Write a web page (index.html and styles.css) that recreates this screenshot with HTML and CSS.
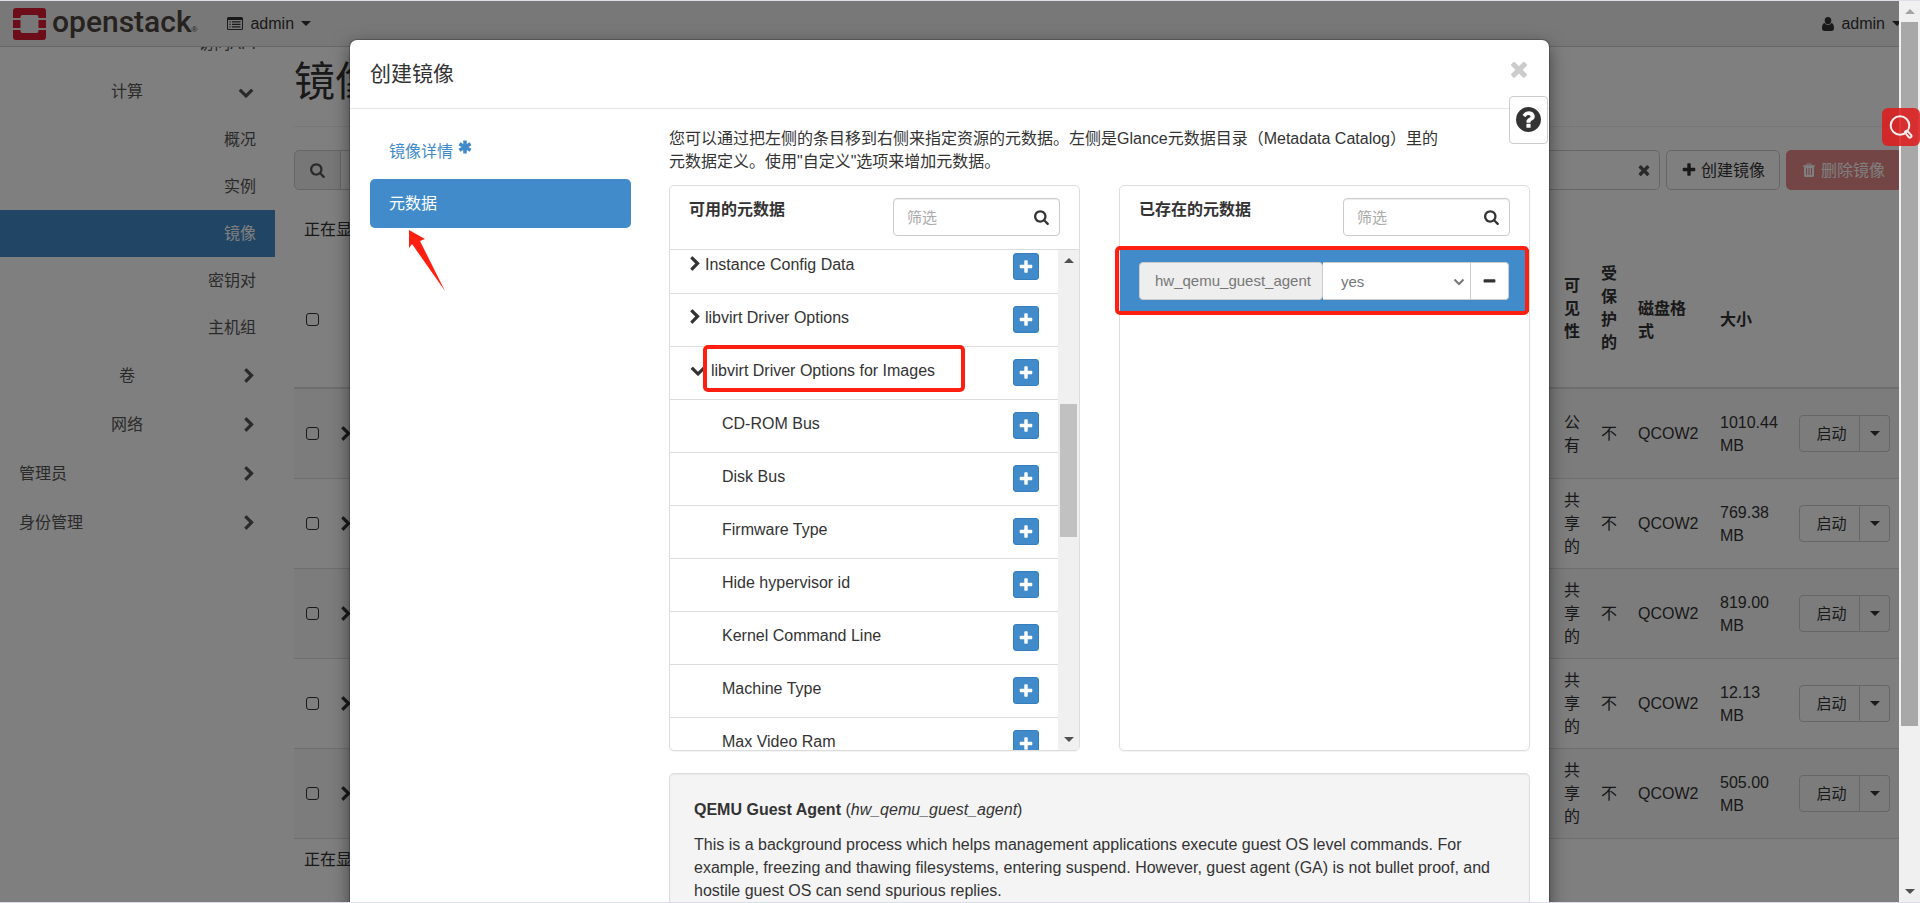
FILE: index.html
```html
<!DOCTYPE html>
<html lang="zh-CN">
<head>
<meta charset="utf-8">
<title>镜像 - OpenStack Dashboard</title>
<link rel="stylesheet" href="styles.css">
</head>
<body>
<svg class="sprite" aria-hidden="true">
  <symbol id="i-search" viewBox="0 0 1792 1792"><path d="M1152 832q0-185-131.500-316.500t-316.500-131.500-316.500 131.500-131.500 316.500 131.500 316.500 316.500 131.500 316.500-131.500 131.500-316.500zm512 832q0 52-38 90t-90 38q-54 0-90-38l-343-342q-179 124-399 124-143 0-273.500-55.500t-225-150-150-225-55.500-273.500 55.500-273.500 150-225 225-150 273.500-55.500 273.500 55.500 225 150 150 225 55.500 273.500q0 220-124 399l343 343q37 37 37 90z"/></symbol>
  <symbol id="i-plus" viewBox="0 0 1792 1792"><path d="M1600 736v192q0 40-28 68t-68 28h-416v416q0 40-28 68t-68 28h-192q-40 0-68-28t-28-68v-416h-416q-40 0-68-28t-28-68v-192q0-40 28-68t68-28h416v-416q0-40 28-68t68-28h192q40 0 68 28t28 68v416h416q40 0 68 28t28 68z"/></symbol>
  <symbol id="i-minus" viewBox="0 0 1792 1792"><path d="M1600 736v192q0 40-28 68t-68 28h-1216q-40 0-68-28t-28-68v-192q0-40 28-68t68-28h1216q40 0 68 28t28 68z"/></symbol>
  <symbol id="i-times" viewBox="0 0 1792 1792"><path d="M1490 1322q0 40-28 68l-136 136q-28 28-68 28t-68-28l-294-294-294 294q-28 28-68 28t-68-28l-136-136q-28-28-28-68t28-68l294-294-294-294q-28-28-28-68t28-68l136-136q28-28 68-28t68 28l294 294 294-294q28-28 68-28t68 28l136 136q28 28 28 68t-28 68l-294 294 294 294q28 28 28 68z"/></symbol>
  <symbol id="i-right" viewBox="340 0 1050 1792"><path d="M1363 877l-742 742q-19 19-45 19t-45-19l-166-166q-19-19-19-45t19-45l531-531-531-531q-19-19-19-45t19-45l166-166q19-19 45-19t45 19l742 742q19 19 19 45t-19 45z"/></symbol>
  <symbol id="i-down" viewBox="0 0 1792 1792"><path d="M1683 808l-742 741q-19 19-45 19t-45-19l-742-741q-19-19-19-45.500t19-45.500l166-165q19-19 45-19t45 19l531 531 531-531q19-19 45-19t45 19l166 165q19 19 19 45.500t-19 45.500z"/></symbol>
  <symbol id="i-help" viewBox="128 128 1536 1536"><path d="M1024 1376v-192q0-14-9-23t-23-9h-192q-14 0-23 9t-9 23v192q0 14 9 23t23 9h192q14 0 23-9t9-23zm256-672q0-88-55.500-163t-138.500-116-170-41q-243 0-371 213-15 24 8 42l132 100q7 6 19 6 16 0 25-12 53-68 86-92 34-24 86-24 48 0 85.500 26t37.500 59q0 38-20 61t-68 45q-63 28-115.500 86.500t-52.500 125.500v36q0 14 9 23t23 9h192q14 0 23-9t9-23q0-19 21.500-49.500t54.500-49.500q32-18 49-28.500t46-35 44.500-48 28-60.500 12.500-81zm384 192q0 209-103 385.500t-279.500 279.500-385.500 103-385.500-103-279.500-279.500-103-385.500 103-385.500 279.500-279.500 385.500-103 385.500 103 279.500 279.500 103 385.500z"/></symbol>
  <symbol id="i-asterisk" viewBox="0 0 14 14"><path d="M7 0.500v13M1.400 3.750l11.200 6.500M1.400 10.250l11.200-6.500" fill="none" stroke="currentColor" stroke-width="3.500" stroke-linecap="butt"/></symbol>
  <symbol id="i-user" viewBox="0 0 12 14"><path d="M6 0a3.300 3.600 0 0 1 0 7.200A3.300 3.600 0 0 1 6 0zM2.600 6c.8 1.300 2 2 3.400 2s2.600-.7 3.400-2C11.300 6.400 12 8.600 12 11.200 12 13 11 14 9.500 14h-7C1 14 0 13 0 11.200 0 8.600.7 6.400 2.600 6z"/></symbol>
  <symbol id="i-list" viewBox="0 0 16 13"><path fill-rule="evenodd" d="M1.500 0h13A1.500 1.500 0 0 1 16 1.500v10a1.500 1.500 0 0 1-1.500 1.500h-13A1.500 1.500 0 0 1 0 11.500v-10A1.500 1.500 0 0 1 1.500 0zM1 3v8.500c0 .3.200.5.500.5h13c.3 0 .5-.2.500-.5V3zM2.500 4.200h1.200v1.200H2.500zM5 4.200h8.500v1.200H5zM2.500 6.700h1.200v1.200H2.500zM5 6.700h8.500v1.200H5zM2.500 9.200h1.200v1.200H2.500zM5 9.200h8.500v1.200H5z"/></symbol>
  <symbol id="i-trash" viewBox="0 0 12 14"><path fill-rule="evenodd" d="M4 .5h4l.9 1.700H12v1.300h-1v8.800c0 .9-.6 1.700-1.400 1.700H2.400C1.600 14 1 13.200 1 12.300V3.500H0V2.200h3.100zM4.500 1.400l-.4.800h3.800l-.4-.8zM3 5v7h1V5zM5.500 5v7h1V5zM8 5v7h1V5z"/></symbol>
  <symbol id="i-thin-down" viewBox="0 0 12 8"><path d="M1.500 1.500 6 6l4.500-4.500" fill="none" stroke="currentColor" stroke-width="2"/></symbol>
</svg>

<div class="window">
  <div class="viewport">
    <div class="app">
      <header class="navbar">
        <a class="brand" href="#" aria-label="openstack">
          <svg class="brand-mark" viewBox="0 0 33 32" aria-hidden="true"><path d="M3 0h27a3 3 0 0 1 3 3v7h-7.500V9a2 2 0 0 0-2-2h-14a2 2 0 0 0-2 2v1H0V3a3 3 0 0 1 3-3zM0 12h7.500v8H0zM25.500 12H33v8h-7.500zM0 22h7.500v1a2 2 0 0 0 2 2h14a2 2 0 0 0 2-2v-1H33v7a3 3 0 0 1-3 3H3a3 3 0 0 1-3-3z"/></svg>
          <span class="brand-name">openstack</span><span class="brand-reg">®</span>
        </a>
        <button class="nav-menu" type="button"><svg class="icon-list"><use href="#i-list"/></svg>admin<span class="caret"></span></button>
        <button class="nav-menu nav-user" type="button"><svg class="icon-user"><use href="#i-user"/></svg>admin<span class="caret"></span></button>
      </header>

      <div class="columns">
        <nav class="sidebar">
          <a class="leaf" href="#">访问API</a>
          <button class="group" type="button"><span>计算</span><svg class="icon"><use href="#i-down"/></svg></button>
          <a class="leaf" href="#">概况</a>
          <a class="leaf" href="#">实例</a>
          <a class="leaf active" href="#">镜像</a>
          <a class="leaf" href="#">密钥对</a>
          <a class="leaf" href="#">主机组</a>
          <button class="group" type="button"><span>卷</span><svg class="chevron"><use href="#i-right"/></svg></button>
          <button class="group" type="button"><span>网络</span><svg class="chevron"><use href="#i-right"/></svg></button>
          <button class="group root" type="button"><span>管理员</span><svg class="chevron"><use href="#i-right"/></svg></button>
          <button class="group root" type="button"><span>身份管理</span><svg class="chevron"><use href="#i-right"/></svg></button>
        </nav>

        <main class="main">
          <h1>镜像</h1>
          <div class="toolbar">
            <div class="search">
              <span class="search-icon"><svg class="icon"><use href="#i-search"/></svg></span>
              <input type="text" aria-label="过滤" placeholder="点击这里">
              <button class="clear" type="button" aria-label="清除"><svg class="icon"><use href="#i-times"/></svg></button>
            </div>
            <button class="btn" type="button"><svg class="icon"><use href="#i-plus"/></svg>创建镜像</button>
            <button class="btn danger" type="button"><svg class="icon-trash"><use href="#i-trash"/></svg>删除镜像</button>
          </div>
          <p class="count">正在显示</p>
          <table class="images">
            <colgroup><col class="c-check"><col class="c-open"><col><col class="c-narrow"><col class="c-narrow"><col class="c-format"><col class="c-size"><col class="c-action"></colgroup>
            <thead>
              <tr><th><input type="checkbox" aria-label="全选"></th><th></th><th></th><th class="sortable">可见性</th><th class="sortable">受保护的</th><th>磁盘格式</th><th>大小</th><th></th></tr>
            </thead>
            <tbody>
              <tr><td><input type="checkbox" aria-label="选择"></td><td><svg class="chevron"><use href="#i-right"/></svg></td><td></td><td>公有</td><td>不</td><td>QCOW2</td><td>1010.44 MB</td><td><div class="split"><button type="button">启动</button><button type="button" aria-label="更多"><span class="caret"></span></button></div></td></tr>
              <tr><td><input type="checkbox" aria-label="选择"></td><td><svg class="chevron"><use href="#i-right"/></svg></td><td></td><td>共享的</td><td>不</td><td>QCOW2</td><td>769.38 MB</td><td><div class="split"><button type="button">启动</button><button type="button" aria-label="更多"><span class="caret"></span></button></div></td></tr>
              <tr><td><input type="checkbox" aria-label="选择"></td><td><svg class="chevron"><use href="#i-right"/></svg></td><td></td><td>共享的</td><td>不</td><td>QCOW2</td><td>819.00 MB</td><td><div class="split"><button type="button">启动</button><button type="button" aria-label="更多"><span class="caret"></span></button></div></td></tr>
              <tr><td><input type="checkbox" aria-label="选择"></td><td><svg class="chevron"><use href="#i-right"/></svg></td><td></td><td>共享的</td><td>不</td><td>QCOW2</td><td>12.13 MB</td><td><div class="split"><button type="button">启动</button><button type="button" aria-label="更多"><span class="caret"></span></button></div></td></tr>
              <tr><td><input type="checkbox" aria-label="选择"></td><td><svg class="chevron"><use href="#i-right"/></svg></td><td></td><td>共享的</td><td>不</td><td>QCOW2</td><td>505.00 MB</td><td><div class="split"><button type="button">启动</button><button type="button" aria-label="更多"><span class="caret"></span></button></div></td></tr>
            </tbody>
          </table>
          <p class="count count-foot">正在显示</p>
        </main>
      </div>
    </div>

    <div class="backdrop">
      <section class="modal" role="dialog" aria-labelledby="modal-title">
        <header class="modal-header">
          <h2 id="modal-title">创建镜像</h2>
          <button class="close" type="button" aria-label="关闭"><svg><use href="#i-times"/></svg></button>
        </header>
        <button class="help" type="button" aria-label="帮助"><svg><use href="#i-help"/></svg></button>
        <div class="modal-body">
          <nav class="steps">
            <a href="#">镜像详情<svg class="required"><use href="#i-asterisk"/></svg></a>
            <a class="active" href="#">元数据</a>
            <svg class="pointer" viewBox="0 0 38 64" aria-hidden="true"><path d="M1 1 17 10 12 12 37 62 4 15 1 19z"/></svg>
          </nav>
          <div class="metadata">
            <p class="intro">您可以通过把左侧的条目移到右侧来指定资源的元数据。左侧是Glance元数据目录（Metadata Catalog）里的元数据定义。使用"自定义"选项来增加元数据。</p>
            <div class="panels">
              <section class="panel">
                <header class="panel-header">
                  <h3>可用的元数据</h3>
                  <div class="filter"><input type="text" placeholder="筛选" aria-label="筛选可用的元数据"><svg class="icon"><use href="#i-search"/></svg></div>
                </header>
                <div class="panel-scroll">
                  <ul class="items">
                    <li><svg class="chevron"><use href="#i-right"/></svg><span>Instance Config Data</span><button class="add" type="button" aria-label="添加"><svg><use href="#i-plus"/></svg></button></li>
                    <li><svg class="chevron"><use href="#i-right"/></svg><span>libvirt Driver Options</span><button class="add" type="button" aria-label="添加"><svg><use href="#i-plus"/></svg></button></li>
                    <li class="marked"><svg class="icon"><use href="#i-down"/></svg><span>libvirt Driver Options for Images</span><button class="add" type="button" aria-label="添加"><svg><use href="#i-plus"/></svg></button></li>
                    <li class="child"><span>CD-ROM Bus</span><button class="add" type="button" aria-label="添加"><svg><use href="#i-plus"/></svg></button></li>
                    <li class="child"><span>Disk Bus</span><button class="add" type="button" aria-label="添加"><svg><use href="#i-plus"/></svg></button></li>
                    <li class="child"><span>Firmware Type</span><button class="add" type="button" aria-label="添加"><svg><use href="#i-plus"/></svg></button></li>
                    <li class="child"><span>Hide hypervisor id</span><button class="add" type="button" aria-label="添加"><svg><use href="#i-plus"/></svg></button></li>
                    <li class="child"><span>Kernel Command Line</span><button class="add" type="button" aria-label="添加"><svg><use href="#i-plus"/></svg></button></li>
                    <li class="child"><span>Machine Type</span><button class="add" type="button" aria-label="添加"><svg><use href="#i-plus"/></svg></button></li>
                    <li class="child"><span>Max Video Ram</span><button class="add" type="button" aria-label="添加"><svg><use href="#i-plus"/></svg></button></li>
                  </ul>
                  <div class="scrollbar list-scrollbar" aria-hidden="true"><i class="arrow up"></i><div class="track"><div class="thumb"></div></div><i class="arrow down"></i></div>
                </div>
              </section>
              <section class="panel">
                <header class="panel-header">
                  <h3>已存在的元数据</h3>
                  <div class="filter"><input type="text" placeholder="筛选" aria-label="筛选已存在的元数据"><svg class="icon"><use href="#i-search"/></svg></div>
                </header>
                <div class="existing">
                  <div class="field">
                    <label for="guest-agent">hw_qemu_guest_agent</label>
                    <div class="select"><select id="guest-agent"><option>yes</option><option>no</option></select><svg><use href="#i-thin-down"/></svg></div>
                    <button type="button" aria-label="移除"><svg><use href="#i-minus"/></svg></button>
                  </div>
                </div>
              </section>
            </div>
            <div class="well">
              <p><strong>QEMU Guest Agent</strong> (<em>hw_qemu_guest_agent</em>)</p>
              <p>This is a background process which helps management applications execute guest OS level commands. For example, freezing and thawing filesystems, entering suspend. However, guest agent (GA) is not bullet proof, and hostile guest OS can send spurious replies.</p>
            </div>
          </div>
        </div>
      </section>
    </div>
  </div>
  <div class="scrollbar page-scrollbar" aria-hidden="true"><i class="arrow up"></i><div class="track"><div class="thumb"></div></div><i class="arrow down"></i></div>
  <button class="float-search" type="button" aria-label="搜索"><svg viewBox="0 0 24 24" aria-hidden="true"><circle cx="11" cy="10.500" r="9.300"/><path d="M16.200 17.800c-.6-1 .9-2.600 2-1.900l4 4.200c1 1.400-.9 3.300-2.300 2.200z"/></svg></button>
</div>
</body>
</html>
```
FILE: styles.css
```css
* { box-sizing: border-box; }

body {
  margin: 0;
  font: 16px/23px "Liberation Sans", "Noto Sans CJK SC", sans-serif;
  color: #333;
  background: #fff;
}

h1, h2, h3, p, ul { margin: 0; padding: 0; }
button, input, select { font: inherit; color: inherit; margin: 0; }
button { cursor: pointer; }
a { color: inherit; text-decoration: none; }
svg { display: block; fill: currentColor; }

.sprite { position: absolute; width: 0; height: 0; }
.icon { width: 16px; height: 16px; flex: none; }
.chevron { width: 10px; height: 16px; flex: none; }
.caret {
  display: inline-block;
  border: 5px solid transparent;
  border-top-color: currentColor;
  border-bottom: 0;
}

/* Window frame */
.window {
  position: relative;
  display: grid;
  grid-template-columns: minmax(0, 1fr) 21px;
  height: 100vh;
  overflow: hidden;
  border-top: 1px solid #dcdfe6;
  border-bottom: 1px solid #cfe3e6;
}
.viewport { position: relative; overflow: hidden; }
.app { margin-right: -3px; }

/* Top bar */
.navbar {
  display: flex;
  align-items: center;
  height: 46px;
  background: #f0f0f0;
  border-bottom: 1px solid #ccc;
}
.brand { display: flex; align-items: center; padding-left: 13px; color: #4d4540; }
.brand-mark { width: 33px; height: 32px; color: #da1a32; }
.brand-name { margin-left: 6px; padding-bottom: 4px; font: 500 30px/42px Roboto, sans-serif; }
.brand-reg { font-size: 8px; line-height: 8px; padding-top: 12px; }
.nav-menu {
  display: flex;
  align-items: center;
  gap: 7px;
  margin-left: 30px;
  padding: 0;
  border: 0;
  background: none;
}
.nav-user { margin-left: auto; }
.icon-list { width: 16px; height: 13px; }
.icon-user { width: 12px; height: 14px; }

.columns { display: grid; grid-template-columns: 275px minmax(0, 1fr); }

/* Side navigation, scrolled by part of its first entry */
.sidebar {
  display: flex;
  flex-direction: column;
  overflow: hidden;
  color: #555;
}
.sidebar .leaf:first-child { margin-top: -27px; }
.leaf { padding: 12px 19px; text-align: right; }
.leaf.active { background: #428bca; color: #fff; }
.group {
  display: grid;
  grid-template-columns: 1fr auto 1fr;
  align-items: center;
  padding: 13px 21px 13px 0;
  border: 0;
  background: none;
}
.group span { grid-column: 2; }
.group svg { grid-column: 3; justify-self: end; }
.group.root { grid-template-columns: 1fr auto; padding-left: 19px; text-align: left; }
.group.root span { grid-column: 1; }
.group.root svg { grid-column: 2; }

/* Image list */
.main { padding: 13px 0 0 19px; }
.main h1 {
  padding-bottom: 22px;
  border-bottom: 1px solid #eee;
  font-size: 41px;
  line-height: 44px;
  font-weight: 400;
}
.toolbar { display: flex; gap: 6px; margin-top: 23px; height: 40px; }
.search { position: relative; display: flex; flex: 1; }
.search-icon {
  display: flex;
  align-items: center;
  justify-content: center;
  width: 47px;
  border: 1px solid #ccc;
  border-radius: 5px 0 0 5px;
  background: #eee;
  color: #555;
}
.search input {
  flex: 1;
  min-width: 0;
  padding: 0 8px;
  border: 1px solid #ccc;
  border-left: 0;
  border-radius: 0 5px 5px 0;
  background: #fff;
}
.clear {
  position: absolute;
  right: 8px;
  top: 12px;
  padding: 0;
  border: 0;
  background: none;
  color: #555;
}
.btn {
  display: flex;
  align-items: center;
  gap: 4px;
  padding: 0 14px;
  border: 1px solid #ccc;
  border-radius: 5px;
  background: #fff;
}
.btn.danger { gap: 6px; padding: 0 16px; border-color: #e78b89; background: #e78b89; color: #fff; }
.icon-trash { width: 12px; height: 14px; }
.count { margin: 28px 0 11px; padding-left: 10px; }
.count-foot { margin-top: 9px; }

.images { width: 100%; table-layout: fixed; border-collapse: separate; border-spacing: 0; }
.c-check { width: 37px; }
.c-open { width: 36px; }
.c-narrow { width: 37px; }
.c-format { width: 82px; }
.c-size { width: 79px; }
.c-action { width: 113px; }
.images th, .images td { padding: 10px; vertical-align: middle; text-align: left; }
.images th { height: 137px; border-bottom: 2px solid #ddd; }
.images th.sortable { padding-bottom: 33px; }
.images td { height: 90px; border-bottom: 1px solid #ddd; }
.images tbody tr:nth-child(odd) { background: #f9f9f9; }
.images td:nth-child(4), .images td:nth-child(5) { padding-right: 8px; }
.images input {
  appearance: none;
  display: block;
  width: 13px;
  height: 13px;
  margin-left: 2px;
  border: 1px solid #333;
  border-radius: 3px;
}
.split { display: flex; }
.split button {
  width: 61px;
  height: 37px;
  padding: 0 12px 0 16px;
  border: 1px solid #ccc;
  border-radius: 4px 0 0 4px;
  background: none;
  font-size: 15px;
  white-space: nowrap;
}
.split button + button {
  display: flex;
  align-items: center;
  justify-content: center;
  width: 30px;
  padding: 0;
  border-left: 0;
  border-radius: 0 4px 4px 0;
}

/* Dialog */
.backdrop {
  position: absolute;
  inset: 0;
  display: flex;
  justify-content: center;
  align-items: flex-start;
  overflow: hidden;
  padding-top: 39px;
  background: rgba(0, 0, 0, .5);
}
.modal {
  position: relative;
  width: min(1199px, 100%);
  border-radius: 7px;
  background: #fff;
  box-shadow: 0 6px 18px rgba(0, 0, 0, .5), 0 0 0 1px rgba(0, 0, 0, .2);
}
.modal-header {
  display: flex;
  justify-content: space-between;
  align-items: flex-start;
  height: 69px;
  padding: 17px 18px 0 20px;
  border-bottom: 1px solid #e5e5e5;
}
.modal-header h2 { font-size: 21px; line-height: 34px; font-weight: 400; }
.close { padding: 0; border: 0; background: none; color: #ccc; }
.close svg { width: 24px; height: 24px; }
.help {
  position: absolute;
  top: 56px;
  right: 1px;
  padding: 10px 6px 11px;
  border: 1px solid #ccc;
  border-radius: 4px;
  background: #fff;
}
.help svg { width: 25px; height: 25px; }
.modal-body {
  display: grid;
  grid-template-columns: 261px minmax(0, 1fr);
  gap: 38px;
  padding: 18px 19px 24px 20px;
}

.steps { position: relative; display: flex; flex-direction: column; gap: 3px; }
.steps a { display: flex; padding: 13px 19px; border-radius: 5px; color: #428bca; }
.steps a.active { background: #428bca; color: #fff; }
.required { width: 14px; height: 14px; margin-left: 5px; }
.pointer { position: absolute; left: 38px; top: 102px; width: 38px; height: 64px; color: #ff1f10; }

.intro { max-width: 782px; margin-bottom: 12px; }
.panels { display: grid; grid-template-columns: 1fr 1fr; gap: 39px; height: 566px; }
.panel {
  display: flex;
  flex-direction: column;
  min-height: 0;
  border: 1px solid #ddd;
  border-radius: 5px;
  box-shadow: 0 1px 1px rgba(0, 0, 0, .05);
}
.panel-header {
  display: flex;
  justify-content: space-between;
  height: 64px;
  padding: 12px 19px;
  border-bottom: 1px solid #ddd;
}
.panel-header h3 { font-size: 16px; line-height: 23px; font-weight: 700; }
.filter { position: relative; width: 167px; }
.filter input {
  display: block;
  width: 100%;
  height: 38px;
  padding: 0 40px 0 13px;
  border: 1px solid #ccc;
  border-radius: 4px;
  box-shadow: inset 0 1px 1px rgba(0, 0, 0, .075);
  font-size: 15px;
}
.filter input::placeholder { color: #aaa; }
.filter .icon { position: absolute; right: 10px; top: 11px; }

.panel-scroll { display: flex; flex: 1; min-height: 0; overflow: hidden; }
.items { flex: 1; margin-top: -9px; list-style: none; }
.items li {
  position: relative;
  display: flex;
  align-items: flex-start;
  gap: 5px;
  padding: 12px 19px 13px 20px;
  border-bottom: 1px solid #ddd;
}
.items span { flex: 1; }
.items .child { padding-left: 52px; }
.items .chevron, .items .icon { margin-top: 3px; }
.items .marked::after {
  content: "";
  box-sizing: border-box;
  position: absolute;
  left: 33px;
  top: -2px;
  width: 262px;
  height: 47px;
  border: 4px solid #ff1f10;
  border-radius: 5px;
}
.add {
  display: flex;
  align-items: center;
  justify-content: center;
  width: 26px;
  height: 27px;
  padding: 0;
  border: 1px solid #357ebd;
  border-radius: 3px;
  background: #428bca;
  color: #fff;
}
.add svg { width: 16px; height: 16px; }

.existing { position: relative; padding: 12px 20px 12px 19px; background: #428bca; }
.existing::after {
  content: "";
  position: absolute;
  inset: -4px 0 -3px -5px;
  border: 4px solid #ff1f10;
  border-radius: 5px;
  pointer-events: none;
}
.field { display: flex; height: 38px; font-size: 15px; color: #777; }
.field label {
  padding: 6px 11px 0 15px;
  border: 1px solid #ccc;
  border-radius: 4px;
  background: #eee;
}
.select { position: relative; flex: 1; }
.select select {
  appearance: none;
  width: 100%;
  height: 38px;
  padding: 0 18px;
  border: 1px solid #ccc;
  border-left: 0;
  border-radius: 0;
  background: #fff;
}
.select svg { position: absolute; right: 6px; top: 16px; width: 12px; height: 8px; }
.field button {
  display: flex;
  align-items: center;
  justify-content: center;
  width: 38px;
  padding: 0;
  border: 1px solid #ccc;
  border-left: 0;
  border-radius: 0 4px 4px 0;
  background: #fff;
  color: #333;
}
.field button svg { width: 15px; height: 15px; }

.well {
  margin-top: 22px;
  padding: 24px;
  border: 1px solid #ddd;
  border-radius: 5px;
  background: #f4f4f4;
  box-shadow: inset 0 1px 1px rgba(0, 0, 0, .05);
}
.well p + p { margin-top: 12px; }

/* Scrollbars */
.scrollbar { display: flex; flex-direction: column; align-items: center; width: 21px; background: #f0f0f0; }
.arrow { border: 5px solid transparent; }
.arrow.up { border-top: 0; border-bottom-color: #505050; margin: 8px 0; }
.arrow.down { border-bottom: 0; border-top-color: #505050; margin: 8px 0; }
.track { flex: 1; width: 17px; }
.thumb { background: #c1c1c1; }
.list-scrollbar .thumb { height: 29%; margin-top: 133px; }
.page-scrollbar .arrow.up { border-bottom-color: #a3a3a3; }
.page-scrollbar .thumb { height: 82%; background: #a8a8a8; }

.float-search {
  position: absolute;
  right: 0;
  top: 107px;
  padding: 7px;
  border: 0;
  border-radius: 6px;
  background: rgba(221, 30, 30, .88);
}
.float-search svg { width: 24px; height: 24px; fill: none; stroke: #eee; stroke-width: 2; }
```
